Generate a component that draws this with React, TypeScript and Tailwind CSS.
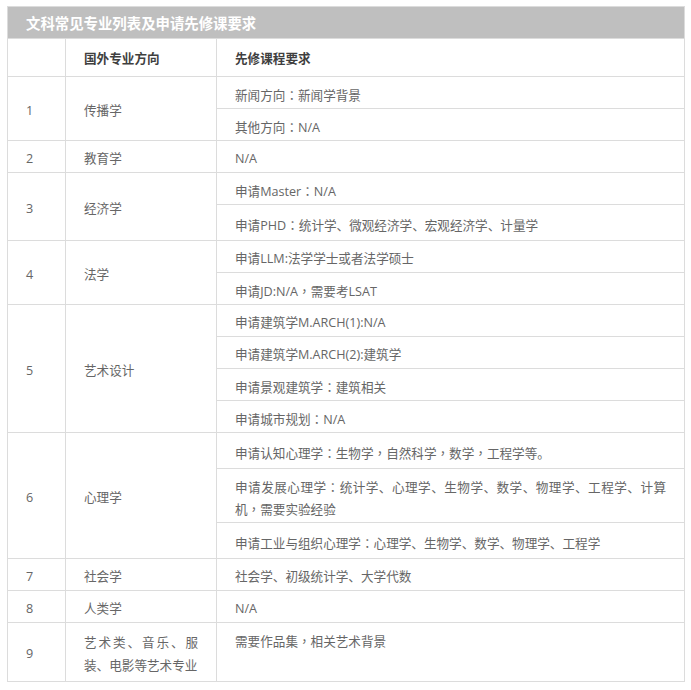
import React from 'react';

type Row = {
  no: string;
  major: string;
  reqs: { text: string; h: string }[];
  tall?: boolean;
};

const rows: Row[] = [
  {
    no: '1',
    major: '传播学',
    reqs: [
      { text: '新闻方向：新闻学背景', h: 'h-[32px]' },
      { text: '其他方向：N/A', h: 'h-[32px]' },
    ],
  },
  { no: '2', major: '教育学', reqs: [{ text: 'N/A', h: 'h-[32px]' }] },
  {
    no: '3',
    major: '经济学',
    reqs: [
      { text: '申请Master：N/A', h: 'h-[32px]' },
      { text: '申请PHD：统计学、微观经济学、宏观经济学、计量学', h: 'h-[36px]' },
    ],
  },
  {
    no: '4',
    major: '法学',
    reqs: [
      { text: '申请LLM:法学学士或者法学硕士', h: 'h-[32px]' },
      { text: '申请JD:N/A，需要考LSAT', h: 'h-[32px]' },
    ],
  },
  {
    no: '5',
    major: '艺术设计',
    reqs: [
      { text: '申请建筑学M.ARCH(1):N/A', h: 'h-[32px]' },
      { text: '申请建筑学M.ARCH(2):建筑学', h: 'h-[32px]' },
      { text: '申请景观建筑学：建筑相关', h: 'h-[32px]' },
      { text: '申请城市规划：N/A', h: 'h-[32px]' },
    ],
  },
  {
    no: '6',
    major: '心理学',
    reqs: [
      { text: '申请认知心理学：生物学，自然科学，数学，工程学等。', h: 'h-[36px]' },
      {
        text: '申请发展心理学：统计学、心理学、生物学、数学、物理学、工程学、计算机，需要实验经验',
        h: 'h-[54px]',
      },
      { text: '申请工业与组织心理学：心理学、生物学、数学、物理学、工程学', h: 'h-[36px]' },
    ],
  },
  { no: '7', major: '社会学', reqs: [{ text: '社会学、初级统计学、大学代数', h: 'h-[32px]' }] },
  { no: '8', major: '人类学', reqs: [{ text: 'N/A', h: 'h-[32px]' }] },
  {
    no: '9',
    major: '艺术类、音乐、服装、电影等艺术专业',
    reqs: [{ text: '需要作品集，相关艺术背景', h: 'h-[59px]' }],
    tall: true,
  },
];

// full-width colon / comma are centred in the source font, TC glyphs sit the same way
function Txt({ s }: { s: string }) {
  const parts = s.split(/([：，])/);
  return (
    <>
      {parts.map((p, i) =>
        p === '：' || p === '，' ? (
          <span key={i} className="font-['Noto_Sans_CJK_TC',sans-serif]">
            {p}
          </span>
        ) : (
          <React.Fragment key={i}>{p}</React.Fragment>
        )
      )}
    </>
  );
}

const cell = 'border border-[#dcdcdc] px-[18px] text-justify';

export default function App() {
  return (
    <div
      className="min-h-[690px] w-[691px] bg-white pt-[6px] pl-[7px] text-[12.6px] text-[#666]"
      style={{ fontFamily: '"Open Sans", "Noto Sans CJK SC", sans-serif' }}
    >
      <table className="w-[677px] table-fixed border-collapse">
        <colgroup>
          <col className="w-[58px]" />
          <col className="w-[151px]" />
          <col className="w-[468px]" />
        </colgroup>
        <tbody>
          <tr>
            <td
              colSpan={3}
              className="h-[32px] border border-[#dcdcdc] bg-[#bfbfbf] px-[18px] pt-[2px] text-[14.4px] font-bold text-white"
            >
              文科常见专业列表及申请先修课要求
            </td>
          </tr>
          <tr className="font-bold text-[#3f3f3f]">
            <td className={`${cell} h-[38px] pt-[3px] leading-[24px]`}></td>
            <td className={`${cell} h-[38px] pt-[3px] leading-[24px]`}>国外专业方向</td>
            <td className={`${cell} h-[38px] pt-[3px] leading-[24px]`}>先修课程要求</td>
          </tr>
          {rows.map((r) =>
            r.reqs.map((q, i) => (
              <tr key={r.no + '-' + i}>
                {i === 0 && (
                  <>
                    <td rowSpan={r.reqs.length} className={`${cell} pt-[4px] align-middle leading-[24px]`}>
                      {r.no}
                    </td>
                    <td rowSpan={r.reqs.length} className={`${cell} pt-[4px] align-middle leading-[23px]`}>
                      {r.major}
                    </td>
                  </>
                )}
                <td
                  className={`${cell} ${q.h} leading-[21px] ${r.tall ? 'pt-[7px] align-top' : 'pt-[4px] align-middle'}`}
                >
                  <Txt s={q.text} />
                </td>
              </tr>
            ))
          )}
        </tbody>
      </table>
    </div>
  );
}
